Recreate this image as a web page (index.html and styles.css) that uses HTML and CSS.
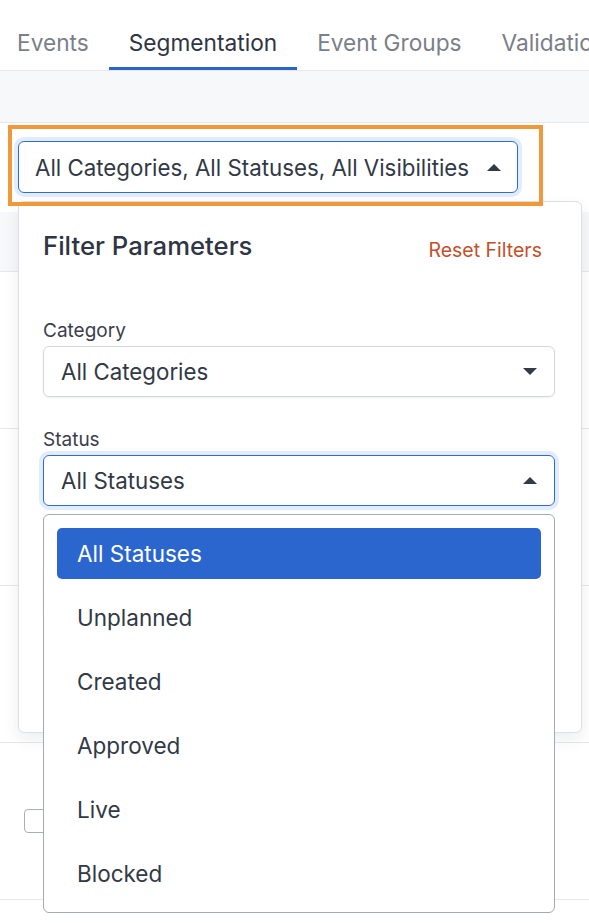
FILE: index.html
```html
<!DOCTYPE html>
<html lang="en">
<head>
    <meta charset="UTF-8">
    <meta name="viewport" content="width=device-width, initial-scale=1.0">
    <title>Segmentation</title>
    <link rel="stylesheet" href="styles.css">
</head>
<body>
    <nav class="tabs">
        <a class="tab" href="#">Events</a>
        <a class="tab active" href="#">Segmentation</a>
        <a class="tab" href="#">Event Groups</a>
        <a class="tab" href="#">Validation</a>
    </nav>
    <div class="subbar"></div>

    <div class="toolbar">
        <div class="filter">
            <button class="filter-toggle">
                All Categories, All Statuses, All Visibilities
                <span class="caret up"></span>
            </button>
            <div class="highlight"></div>

            <div class="filter-panel">
                <div class="panel-head">
                    <h3>Filter Parameters</h3>
                    <button class="reset">Reset Filters</button>
                </div>

                <div class="field">
                    <label>Category</label>
                    <div class="select">
                        <span>All Categories</span>
                        <span class="caret"></span>
                    </div>
                </div>

                <div class="field">
                    <label>Status</label>
                    <div class="select focused">
                        <span>All Statuses</span>
                        <span class="caret up"></span>
                    </div>
                    <ul class="options">
                        <li class="selected">All Statuses</li>
                        <li>Unplanned</li>
                        <li>Created</li>
                        <li>Approved</li>
                        <li>Live</li>
                        <li>Blocked</li>
                    </ul>
                </div>

                <div class="field">
                    <label>Visibility</label>
                    <div class="select">
                        <span>All Visibilities</span>
                        <span class="caret"></span>
                    </div>
                </div>

                <div class="panel-actions">
                    <button class="apply-btn">Apply</button>
                </div>
            </div>
        </div>
    </div>

    <table class="events">
        <thead>
            <tr>
                <th class="col-check"><span class="check"></span></th>
                <th>Event Name</th>
            </tr>
        </thead>
        <tbody>
            <tr>
                <td class="col-check"><span class="check"></span></td>
                <td>page_view</td>
            </tr>
            <tr>
                <td class="col-check"><span class="check"></span></td>
                <td>sign_up</td>
            </tr>
            <tr>
                <td class="col-check"><span class="check"></span></td>
                <td>add_to_cart</td>
            </tr>
            <tr>
                <td class="col-check"><span class="check"></span></td>
                <td>checkout</td>
            </tr>
            <tr>
                <td class="col-check"><span class="check"></span></td>
                <td>purchase</td>
            </tr>
        </tbody>
    </table>
</body>
</html>
```

FILE: styles.css
```css
html, body {
    height: 100%;
}

body {
    font-family: 'Inter', 'Noto Sans', sans-serif;
    margin: 0;
    padding: 0;
    background: #fff;
    color: #323946;
    overflow: hidden;
}

button {
    font-family: inherit;
}

/* tabs */
.tabs {
    display: flex;
    height: 70px;
    border-bottom: 1px solid #e6e8eb;
    white-space: nowrap;
    overflow: hidden;
}

.tab {
    box-sizing: border-box;
    height: 70px;
    padding: 29px 20px 0;
    font-size: 22.7px;
    line-height: 28px;
    color: #7a7f89;
    text-decoration: none;
    border-bottom: 3px solid transparent;
}

.tab:first-child {
    margin-left: -3px;
}

.tab.active {
    color: #2f3542;
    border-bottom-color: #2b64cf;
}

.subbar {
    height: 51px;
    background: #f7f8fa;
    border-bottom: 1px solid #e6e8eb;
}

/* filter toolbar */
.toolbar {
    box-sizing: border-box;
    height: 89px;
    padding: 18px 0 0 18px;
}

.filter {
    position: relative;
    display: inline-block;
}

.filter-toggle {
    display: inline-flex;
    align-items: center;
    gap: 18px;
    height: 52px;
    padding: 0 16px;
    background: #fff;
    border: 1px solid #2f6bd8;
    border-radius: 6px;
    box-shadow: 0 0 0 4px #e1ecfc;
    font-size: 22.3px;
    color: #323946;
}

.caret {
    width: 0;
    height: 0;
    border-left: 7px solid transparent;
    border-right: 7px solid transparent;
    border-top: 7px solid #343a46;
}

.caret.up {
    border-top: none;
    border-bottom: 7px solid #343a46;
}

.highlight {
    position: absolute;
    top: -16px;
    left: -10px;
    right: -25px;
    bottom: -13px;
    border: 4px solid #f0993b;
    pointer-events: none;
    z-index: 3;
}

/* popover */
.filter-panel {
    position: absolute;
    top: calc(100% + 8px);
    left: 0;
    width: 564px;
    box-sizing: border-box;
    padding: 28px 26px 26px 24px;
    background: #fff;
    border: 1px solid #dcdfe4;
    border-radius: 6px;
    box-shadow: 0 6px 16px rgba(17, 24, 39, 0.08);
    z-index: 2;
}

.panel-head {
    display: flex;
    justify-content: space-between;
    align-items: flex-end;
    margin-bottom: 57px;
}

.panel-head h3 {
    margin: 0;
    font-size: 25.7px;
    line-height: 32px;
    font-weight: 500;
    color: #2f3542;
}

.reset {
    margin-right: 13px;
    padding: 0;
    background: none;
    border: none;
    font-size: 19.5px;
    line-height: 24px;
    color: #c4502a;
    cursor: pointer;
}

.field {
    position: relative;
    margin-bottom: 31px;
}

.field label {
    display: block;
    margin-bottom: 3px;
    font-size: 19px;
    line-height: 24px;
    color: #3a404b;
}

.select {
    display: flex;
    align-items: center;
    justify-content: space-between;
    box-sizing: border-box;
    height: 51px;
    padding: 0 17px;
    border: 1px solid #d3d7e3;
    border-radius: 6px;
    box-shadow: 0 1px 2px rgba(16, 24, 40, 0.06);
    font-size: 22.3px;
}

.select.focused {
    border-color: #2f6bd8;
    box-shadow: 0 0 0 4px #e1ecfc;
}

.options {
    position: absolute;
    top: calc(100% + 8px);
    left: 0;
    right: 0;
    display: flex;
    flex-direction: column;
    gap: 13px;
    margin: 0;
    padding: 13px;
    list-style: none;
    background: #fff;
    border: 1px solid #a4aab4;
    border-radius: 6px;
    z-index: 5;
}

.options li {
    display: flex;
    align-items: center;
    height: 51px;
    padding: 0 20px;
    border-radius: 5px;
    font-size: 22.5px;
    color: #323946;
}

.options li.selected {
    background: #2b66cf;
    color: #fff;
}

.panel-actions {
    display: flex;
    justify-content: flex-end;
    margin-top: 40px;
}

.apply-btn {
    height: 51px;
    padding: 0 24px;
    background: #2b66cf;
    color: #fff;
    border: none;
    border-radius: 6px;
    font-size: 20px;
}

/* events table */
.events {
    width: 100%;
    border-collapse: collapse;
}

.events th {
    height: 59px;
    padding: 0;
    background: #f7f8fa;
    border-bottom: 1px solid #e6e8eb;
    text-align: left;
    font-size: 18px;
    font-weight: 500;
}

.events td {
    height: 156px;
    padding: 0;
    border-bottom: 1px solid #e6e8eb;
    font-size: 20px;
}

.events .col-check {
    width: 24px;
    padding: 0 24px;
}

.check {
    display: block;
    width: 22px;
    height: 22px;
    border: 1px solid #a9afb8;
    border-radius: 4px;
    background: #fff;
}
```
